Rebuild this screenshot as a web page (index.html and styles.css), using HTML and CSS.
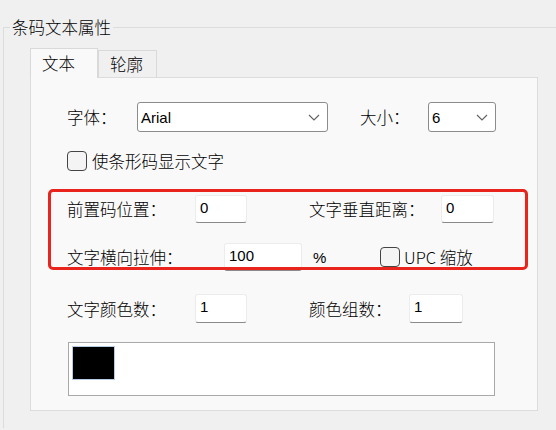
FILE: index.html
```html
<!DOCTYPE html>
<html lang="zh-CN">
<head>
    <meta charset="UTF-8">
    <title>条码文本属性</title>
    <link rel="stylesheet" href="styles.css">
</head>
<body>
    <fieldset class="group">
        <legend>条码文本属性</legend>

        <div class="tabs">
            <div class="tab active">文本</div>
            <div class="tab">轮廓</div>
        </div>

        <div class="panel">
            <div class="row row-font">
                <span class="label w70">字体：</span>
                <div class="combo w191">
                    <span>Arial</span>
                    <svg width="12" height="7" viewBox="0 0 12 7"><polyline points="1,1 6,6 11,1" fill="none" stroke="#606060" stroke-width="1.1"/></svg>
                </div>
                <span class="label w68 ml32">大小：</span>
                <div class="combo w68">
                    <span>6</span>
                    <svg width="12" height="7" viewBox="0 0 12 7"><polyline points="1,1 6,6 11,1" fill="none" stroke="#606060" stroke-width="1.1"/></svg>
                </div>
            </div>

            <div class="row row-check">
                <span class="check"></span>
                <span class="label">使条形码显示文字</span>
            </div>

            <div class="row row-prefix">
                <span class="label w128">前置码位置：</span>
                <div class="field w52">0</div>
                <span class="label w132 ml62">文字垂直距离：</span>
                <div class="field w53">0</div>
            </div>

            <div class="row row-stretch">
                <span class="label w157">文字横向拉伸：</span>
                <div class="field w78">100</div>
                <span class="label pct">%</span>
                <span class="check"></span>
                <span class="label upc">UPC 缩放</span>
            </div>

            <div class="row row-colors">
                <span class="label w128">文字颜色数：</span>
                <div class="field w52">1</div>
                <span class="label w100 ml62">颜色组数：</span>
                <div class="field w54">1</div>
            </div>

            <div class="swatches">
                <div class="swatch"></div>
            </div>
        </div>
    </fieldset>

    <div class="mark"></div>
</body>
</html>
```

FILE: styles.css
```css
html {
    overflow: hidden;
}
body {
    margin: 0;
    background: #f0f0f0;
    font-family: "Noto Sans CJK SC", "Liberation Sans", sans-serif;
    font-weight: 300;
    font-size: 16.5px;
    color: #000;
    width: 556px;
    height: 430px;
    overflow: hidden;
    position: relative;
}
.group {
    margin: 16px 0 0 3px;
    padding: 0 0 17px 0;
    width: 553px;
    box-sizing: border-box;
    border: 1px solid #dcdcdc;
    border-right: none;
    border-bottom: none;
    min-width: 0;
}
.group legend {
    margin-left: 6px;
    padding: 0 2px;
    line-height: 22px;
}
.tabs {
    display: flex;
    align-items: flex-end;
    margin: 10px 0 0 26px;
    height: 29px;
}
.tab {
    height: 26px;
    line-height: 26px;
    padding: 0 11px;
    width: 35px;
    border: 1px solid #d9d9d9;
    border-bottom: none;
    background: #f0f0f0;
}
.tab.active {
    height: 29px;
    line-height: 28px;
    width: 44px;
    background: #f9f9f9;
    margin-bottom: -1px;
    position: relative;
}
.panel {
    margin-left: 26px;
    width: 508px;
    height: 334px;
    box-sizing: border-box;
    border: 1px solid #dcdcdc;
    background: #f9f9f9;
    padding: 24px 0 0 36px;
}
.row {
    display: flex;
    align-items: center;
}
.label {
    flex: none;
    white-space: nowrap;
}
.w68 { width: 68px; }
.w70 { width: 70px; }
.w100 { width: 100px; }
.w128 { width: 128px; }
.w132 { width: 132px; }
.w157 { width: 157px; }
.ml32 { margin-left: 32px; }
.ml62 { margin-left: 62px; }

.row-font { height: 30px; }
.row-check { height: 20px; margin-top: 19px; }
.row-prefix { height: 28px; margin-top: 24px; }
.row-stretch { height: 28px; margin-top: 20px; }
.row-colors { height: 29px; margin-top: 23px; }

.combo {
    flex: none;
    height: 30px;
    box-sizing: border-box;
    border: 1px solid #8c8c8c;
    border-radius: 3px;
    background: #fff;
    display: flex;
    align-items: center;
    justify-content: space-between;
    padding: 0 7px 0 3px;
    font-family: "Liberation Sans", sans-serif;
    font-weight: 400;
    font-size: 15px;
}
.combo.w191 { width: 191px; }
.combo.w68 { width: 68px; }

.field {
    flex: none;
    height: 100%;
    box-sizing: border-box;
    background: #fff;
    border: 1px solid #ececec;
    border-bottom: 1px solid #8a8a8a;
    border-radius: 3px;
    padding: 3px 0 0 4px;
    font-family: "Liberation Sans", sans-serif;
    font-weight: 400;
    font-size: 15px;
    line-height: 18px;
}
.field.w52 { width: 52px; }
.field.w53 { width: 53px; }
.field.w54 { width: 54px; }
.field.w78 { width: 78px; }

.check {
    flex: none;
    width: 20px;
    height: 20px;
    box-sizing: border-box;
    border: 1px solid #444;
    border-radius: 4px;
    background: #f4f4f4;
    margin-right: 5px;
}
.pct {
    margin-left: 11px;
    width: 67px;
    font-family: "Liberation Sans", sans-serif;
    font-weight: 400;
    font-size: 15px;
}
.upc { margin-left: -1px; }

.swatches {
    margin-top: 19px;
    margin-left: 1px;
    width: 427px;
    height: 54px;
    box-sizing: border-box;
    border: 1px solid #a9a9a9;
    background: #fff;
    padding: 3px;
}
.swatch {
    width: 43px;
    height: 34px;
    background: #000;
    border: 1px solid #b7cbe6;
    box-sizing: border-box;
}

.mark {
    position: absolute;
    left: 48px;
    top: 189px;
    width: 480px;
    height: 81px;
    box-sizing: border-box;
    border: 3px solid #e8241c;
    border-radius: 5px;
}
```
